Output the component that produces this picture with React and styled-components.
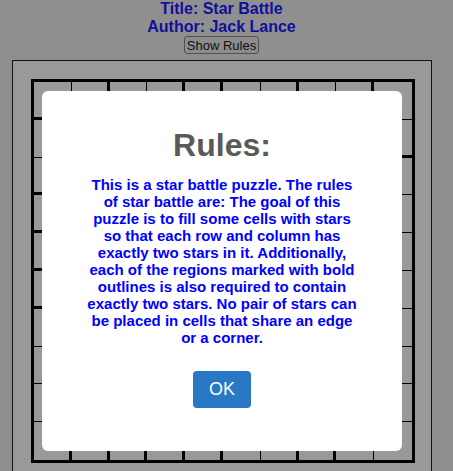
import React from 'react';
import styled, { createGlobalStyle } from 'styled-components';

const GlobalStyle = createGlobalStyle`
  html, body {
    margin: 0;
    padding: 0;
    background: #8f8f8f;
    overflow: hidden;
  }
  body {
    font-family: "Liberation Sans", Arial, sans-serif;
  }
`;

const SIZE = 10;

// columns (per row) whose right edge is a bold region outline
const boldRight = {
  0: [1, 3, 4, 6, 8],
  9: [0, 1, 2, 3, 4, 6, 7],
};

// rows (per column) whose bottom edge is a bold region outline
const boldBottom = {
  0: [0, 2, 3, 4, 5],
  9: [1],
};

const Page = styled.div`
  position: relative;
  width: 443px;
`;

const Header = styled.div`
  display: flex;
  flex-direction: column;
  align-items: center;
`;

const Heading = styled.div`
  font-size: 16px;
  font-weight: bold;
  color: #10109a;
  line-height: 17.5px;
`;

const RulesButton = styled.button`
  margin-top: 1px;
  font-family: "Liberation Sans", Arial, sans-serif;
  font-size: 13px;
  height: 18px;
  padding: 0 2px;
  color: #111;
  background: #8d8d8d;
  border: 1px solid #505050;
  border-radius: 3px;
`;

const Panel = styled.div`
  box-sizing: border-box;
  width: 420px;
  margin: 6px 0 0 12px;
  padding: 18px 0 18px 18px;
  background: #999999;
  border: 1px solid #111;
`;

const Board = styled.div`
  box-sizing: border-box;
  width: 384px;
  height: 384px;
  display: grid;
  grid-template-columns: repeat(${SIZE}, 1fr);
  grid-template-rows: repeat(${SIZE}, 1fr);
  border: 3px solid #000;
  background: #999999;
`;

const Cell = styled.div`
  box-sizing: border-box;
  border-right: ${(p) => (p.$last ? 0 : p.$boldR ? 3 : 1)}px solid #000;
  border-bottom: ${(p) => (p.$lastRow ? 0 : p.$boldB ? 3 : 1)}px solid #000;
`;

const Modal = styled.div`
  position: absolute;
  left: 42px;
  top: 91px;
  box-sizing: border-box;
  width: 360px;
  padding: 36px 45px 43px;
  background: #fff;
  border-radius: 6px;
  display: flex;
  flex-direction: column;
  align-items: center;
  text-align: center;
`;

const ModalTitle = styled.h2`
  margin: 0 0 11px;
  font-size: 32px;
  font-weight: bold;
  line-height: normal;
  color: #5a5a5a;
`;

const RulesText = styled.p`
  margin: 1px 0 25px;
  font-size: 15px;
  font-weight: bold;
  line-height: normal;
  color: #0000ff;
`;

const OkButton = styled.button`
  width: 58px;
  height: 37px;
  font-family: "Liberation Sans", Arial, sans-serif;
  font-size: 18px;
  color: #fff;
  background: #2878c6;
  border: none;
  border-radius: 4px;
`;

const cells = [];
for (let r = 0; r < SIZE; r++) {
  for (let c = 0; c < SIZE; c++) {
    cells.push({ r, c });
  }
}

const App = () => (
  <Page>
    <GlobalStyle />
    <Header>
      <Heading>Title: Star Battle</Heading>
      <Heading>Author: Jack Lance</Heading>
      <RulesButton>Show Rules</RulesButton>
    </Header>
    <Panel>
      <Board>
        {cells.map(({ r, c }) => (
          <Cell
            key={`${r}-${c}`}
            $last={c === SIZE - 1}
            $lastRow={r === SIZE - 1}
            $boldR={(boldRight[r] || []).includes(c)}
            $boldB={(boldBottom[c] || []).includes(r)}
          />
        ))}
      </Board>
    </Panel>
    <Modal>
      <ModalTitle>Rules:</ModalTitle>
      <RulesText>
        This is a star battle puzzle. The rules of star battle are: The goal of this puzzle is to
        fill some cells with stars so that each row and column has exactly two stars in it.
        Additionally, each of the regions marked with bold outlines is also required to contain
        exactly two stars. No pair of stars can be placed in cells that share an edge or a corner.
      </RulesText>
      <OkButton>OK</OkButton>
    </Modal>
  </Page>
);

export default App;
